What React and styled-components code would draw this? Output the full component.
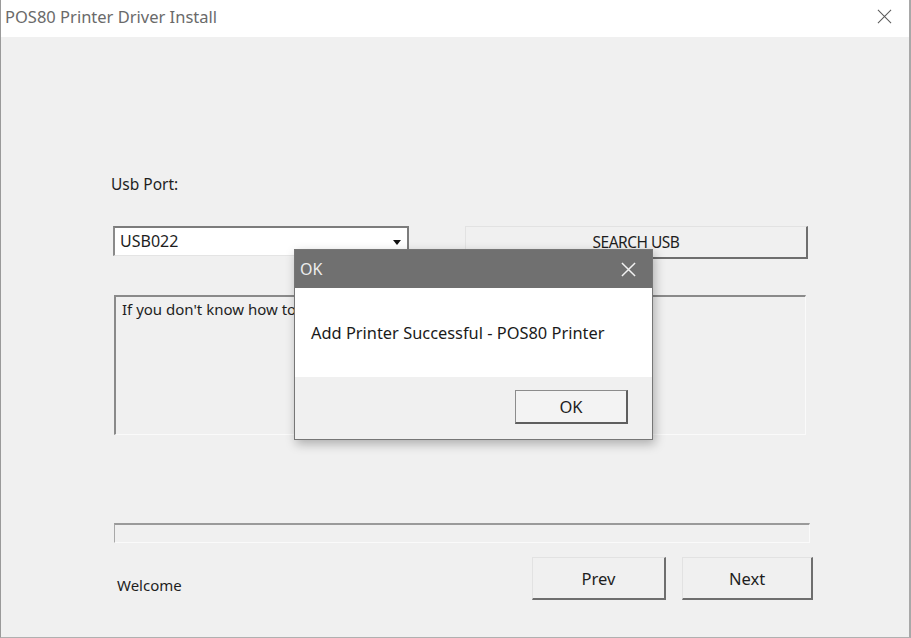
import React from "react";
import styled, { createGlobalStyle } from "styled-components";

const Global = createGlobalStyle`
  html, body {
    margin: 0;
    padding: 0;
    background: #f0f0f0;
  }
  body {
    font-family: "Noto Sans", "Open Sans", "Liberation Sans", sans-serif;
    color: #1e1e1e;
  }
`;

const Window = styled.div`
  position: relative;
  width: 911px;
  height: 638px;
  box-sizing: border-box;
  border-left: 1px solid #9a9a9a;
  border-right: 2px solid #a8a8a8;
  border-bottom: 1px solid #b0b0b0;
  display: flex;
  flex-direction: column;
  overflow: hidden;
`;

const TitleBar = styled.div`
  height: 37px;
  flex-shrink: 0;
  background: #fff;
  display: flex;
  align-items: center;
  justify-content: space-between;
  padding: 0 17px 4px 4px;
  box-sizing: border-box;
`;

const TitleText = styled.span`
  font-size: 16.5px;
  color: #6a6a6a;
`;

const Body = styled.div`
  flex: 1;
  background: #f0f0f0;
  padding: 137px 0 0 110px;
  display: flex;
  flex-direction: column;
`;

const Label = styled.div`
  font-size: 15.5px;
  line-height: 20px;
  margin-bottom: 32px;
`;

const Row = styled.div`
  display: flex;
  align-items: flex-start;
  gap: 56px;
  padding-left: 2px;
`;

const Combo = styled.div`
  width: 296px;
  height: 30px;
  box-sizing: border-box;
  background: #fff;
  border-style: solid;
  border-width: 2px 2px 1px 2px;
  border-color: #7c7c7c #7c7c7c #e4e4e4 #8a8a8a;
  display: flex;
  align-items: center;
  justify-content: space-between;
  padding: 0 6px 2px 5px;
  font-size: 16px;
`;

const Arrow = styled.span`
  width: 0;
  height: 0;
  border-left: 4px solid transparent;
  border-right: 4px solid transparent;
  border-top: 5px solid #111;
  margin-top: 4px;
`;

const RaisedButton = styled.div`
  width: ${(p) => p.$w}px;
  height: ${(p) => p.$h}px;
  box-sizing: border-box;
  background: #f0f0f0;
  border-style: solid;
  border-width: 1px 2px 2px 1px;
  border-color: #e2e2e2 #6e6e6e #6e6e6e #e2e2e2;
  display: flex;
  align-items: center;
  justify-content: center;
  font-size: ${(p) => p.$fs || 16.5}px;
  color: #1e1e1e;
  letter-spacing: ${(p) => (p.$tight ? "-0.5px" : "0")};
`;

const TextArea = styled.div`
  margin: 36px 0 0 3px;
  width: 692px;
  height: 140px;
  box-sizing: border-box;
  border-style: solid;
  border-width: 2px 1px 1px 2px;
  border-color: #8a8a8a #fafafa #fafafa #8a8a8a;
  padding: 2px 6px;
  font-size: 15px;
`;

const Progress = styled.div`
  margin: 88px 0 0 3px;
  width: 696px;
  height: 20px;
  box-sizing: border-box;
  border-style: solid;
  border-width: 2px 1px 1px 1px;
  border-color: #9a9a9a #fafafa #fafafa #a8a8a8;
`;

const Footer = styled.div`
  margin-top: 14px;
  width: 702px;
  display: flex;
  align-items: center;
  padding-left: 6px;
  box-sizing: border-box;
`;

const Status = styled.span`
  font-size: 15px;
  flex: 1;
  padding-top: 12px;
`;

const Buttons = styled.div`
  display: flex;
  gap: 16px;
`;

const Overlay = styled.div`
  position: absolute;
  left: 293px;
  top: 249px;
  width: 359px;
  height: 191px;
  box-sizing: border-box;
  border: 1px solid #767676;
  background: #f0f0f0;
  box-shadow: 2px 4px 10px rgba(0, 0, 0, 0.28);
  display: flex;
  flex-direction: column;
`;

const DialogTitle = styled.div`
  height: 38px;
  background: #707070;
  display: flex;
  align-items: center;
  justify-content: space-between;
  padding: 0 16px 0 5px;
  color: #ececec;
  font-size: 16px;
`;

const DialogBody = styled.div`
  height: 89px;
  background: #fff;
  display: flex;
  align-items: center;
  padding: 0 0 0 16px;
  box-sizing: border-box;
  font-size: 16.4px;
  color: #1a1a1a;
`;

const DialogFooter = styled.div`
  flex: 1;
  display: flex;
  justify-content: flex-end;
  align-items: flex-start;
  padding: 13px 24px 0 0;
`;

const DialogButton = styled.div`
  width: 113px;
  height: 34px;
  box-sizing: border-box;
  border-style: solid;
  border-width: 1px 2px 2px 1px;
  border-color: #8c8c8c #5e5e5e #5e5e5e #8c8c8c;
  background: #f3f3f3;
  display: flex;
  align-items: center;
  justify-content: center;
  font-size: 16.5px;
  color: #1e1e1e;
`;

const Close = ({ size, color, stroke }) => (
  <svg width={size} height={size} viewBox="0 0 16 16">
    <path d="M1 1L15 15M15 1L1 15" stroke={color} strokeWidth={stroke} fill="none" />
  </svg>
);

export default function App() {
  return (
    <>
      <Global />
      <Window>
        <TitleBar>
          <TitleText>POS80 Printer Driver Install</TitleText>
          <Close size={15} color="#5a5a5a" stroke={1.1} />
        </TitleBar>
        <Body>
          <Label>Usb Port:</Label>
          <Row>
            <Combo>
              <span>USB022</span>
              <Arrow />
            </Combo>
            <RaisedButton $w={343} $h={33} $fs={15.5} $tight>
              SEARCH USB
            </RaisedButton>
          </Row>
          <TextArea>If you don't know how to select the port, click SEARCH USB</TextArea>
          <Progress />
          <Footer>
            <Status>Welcome</Status>
            <Buttons>
              <RaisedButton $w={134} $h={43}>Prev</RaisedButton>
              <RaisedButton $w={131} $h={43}>Next</RaisedButton>
            </Buttons>
          </Footer>
        </Body>
        <Overlay>
          <DialogTitle>
            <span>OK</span>
            <Close size={15} color="#f2f2f2" stroke={1.6} />
          </DialogTitle>
          <DialogBody>Add Printer Successful - POS80 Printer</DialogBody>
          <DialogFooter>
            <DialogButton>OK</DialogButton>
          </DialogFooter>
        </Overlay>
      </Window>
    </>
  );
}
